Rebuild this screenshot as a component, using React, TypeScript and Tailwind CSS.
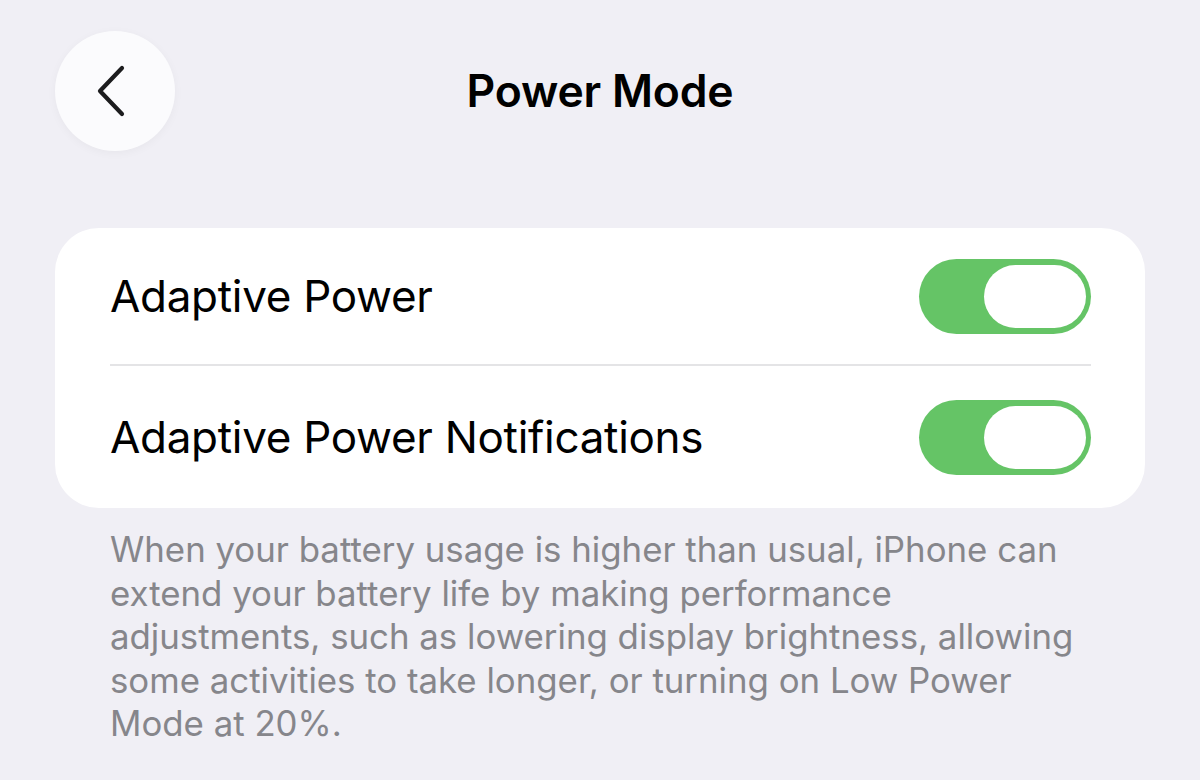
import { useState } from "react";

function Toggle({ on, onChange }: { on: boolean; onChange: () => void }) {
    return (
        <button
            type="button"
            onClick={onChange}
            className={`relative w-[172px] h-[75px] rounded-full shrink-0 ${on ? "bg-[#65c466]" : "bg-[#e9e9eb]"}`}
        >
            <span
                className={`absolute top-[6px] h-[63px] w-[102px] rounded-full bg-white ${on ? "right-[5px]" : "left-[5px]"}`}
            />
        </button>
    );
}

export default function App() {
    const [adaptive, setAdaptive] = useState(true);
    const [notify, setNotify] = useState(true);

    return (
        <div className="w-[1200px] h-[780px] bg-[#f0eff5] font-['Inter',sans-serif] overflow-hidden">
            {/* header */}
            <div className="relative h-[182px] pt-[31px] px-[55px]">
                <button
                    type="button"
                    className="w-[120px] h-[120px] rounded-full bg-[#fbfbfd] shadow-[0_2px_10px_rgba(0,0,0,0.04)] flex items-center justify-center"
                >
                    <svg width="40" height="56" viewBox="0 0 40 56" fill="none">
                        <path d="M27 5 L5 28 L27 51" stroke="#1c1c1e" strokeWidth="4.2" strokeLinecap="round" strokeLinejoin="round" />
                    </svg>
                </button>
                <h1 className="absolute top-[62px] left-0 right-0 text-center text-[44.5px] leading-[58px] font-semibold text-black tracking-[-0.2px]">
                    Power Mode
                </h1>
            </div>

            {/* settings card */}
            <div className="mx-[55px] mt-[46px] bg-white rounded-[44px] pl-[55px] pr-[54px]">
                <div className="h-[138px] flex items-center justify-between border-b-2 border-[#e4e4e6]">
                    <span className="text-[44px] text-black tracking-[-0.3px]">Adaptive Power</span>
                    <Toggle on={adaptive} onChange={() => setAdaptive(!adaptive)} />
                </div>
                <div className="h-[142px] flex items-center justify-between">
                    <span className="text-[44px] text-black tracking-[-0.3px]">Adaptive Power Notifications</span>
                    <Toggle on={notify} onChange={() => setNotify(!notify)} />
                </div>
            </div>

            <p className="mx-[110px] mt-[20px] text-[34.8px] leading-[43.5px] text-[#86868b]">
                When your battery usage is higher than usual, iPhone can
                <br />
                extend your battery life by making performance
                <br />
                adjustments, such as lowering display brightness, allowing
                <br />
                some activities to take longer, or turning on Low Power
                <br />
                Mode at 20%.
            </p>
        </div>
    );
}
